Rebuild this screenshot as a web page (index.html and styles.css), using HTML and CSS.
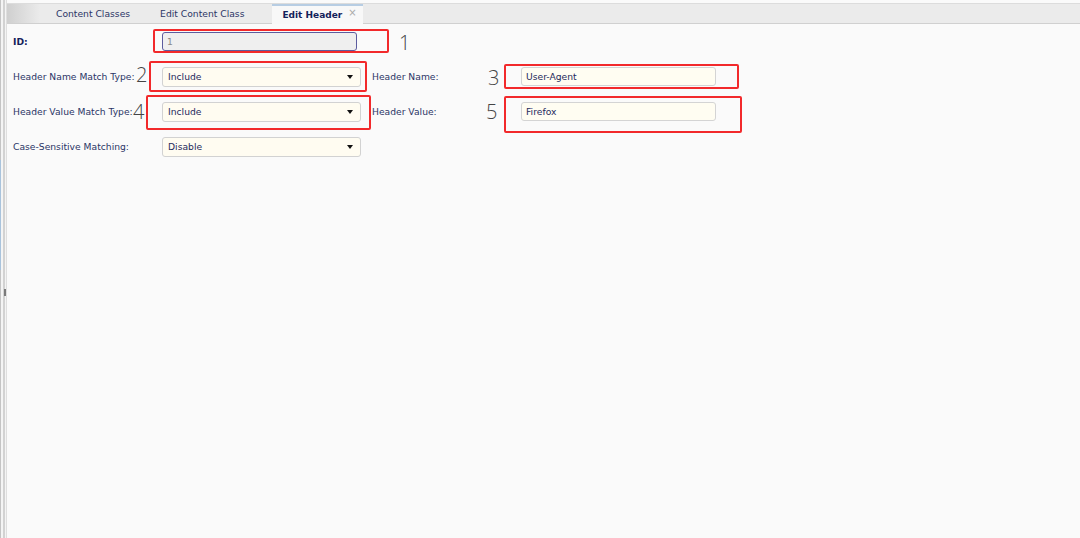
FILE: index.html
```html
<!DOCTYPE html>
<html lang="en">
<head>
  <meta charset="UTF-8" />
  <title>Edit Header</title>
  <link rel="stylesheet" href="styles.css">
</head>
<body>

<div class="page">
  <div class="side-strip">
    <div class="side-blue"></div>
    <div class="side-handle"></div>
  </div>

  <div class="main">
    <div class="tabbar">
      <div class="tab-start"></div>
      <div class="tab">Content Classes</div>
      <div class="tab">Edit Content Class</div>
      <div class="tab active">Edit Header <span class="tab-close">&times;</span></div>
    </div>

    <div class="form">
      <div class="row">
        <label class="lbl bold">ID:</label>
        <div class="field"><input class="txt readonly" value="1" readonly></div>
      </div>
      <div class="row">
        <label class="lbl">Header Name Match Type:</label>
        <div class="field"><div class="select">Include<span class="arrow"></span></div></div>
        <label class="lbl">Header Name:</label>
        <div class="field"><input class="txt" value="User-Agent"></div>
      </div>
      <div class="row">
        <label class="lbl">Header Value Match Type:</label>
        <div class="field"><div class="select">Include<span class="arrow"></span></div></div>
        <label class="lbl">Header Value:</label>
        <div class="field"><input class="txt" value="Firefox"></div>
      </div>
      <div class="row">
        <label class="lbl">Case-Sensitive Matching:</label>
        <div class="field"><div class="select">Disable<span class="arrow"></span></div></div>
      </div>

      <!-- annotations drawn over the form -->
      <div class="mark m1"></div><div class="num n1">1</div>
      <div class="mark m2"></div><div class="num n2">2</div>
      <div class="mark m3"></div><div class="num n3">3</div>
      <div class="mark m4"></div><div class="num n4">4</div>
      <div class="mark m5"></div><div class="num n5">5</div>
    </div>
  </div>
</div>

</body>
</html>
```

FILE: styles.css
```css
* { margin: 0; padding: 0; box-sizing: border-box; }

html, body {
  height: 100%;
  background: #fafafa;
  font-family: "DejaVu Sans", Verdana, sans-serif;
  font-size: 9.2px;
  color: #23305e;
}

.page {
  display: flex;
  height: 100%;
}

.side-strip {
  width: 7px;
  flex-shrink: 0;
  position: relative;
  background: #f4f4f4;
  border-left: 1px solid #c4c4c4;
  border-right: 1px solid #dedede;
}

.side-strip::before {
  content: "";
  position: absolute;
  top: 0;
  bottom: 0;
  left: 2px;
  width: 2px;
  background: #d2d2d2;
}

.side-blue {
  position: absolute;
  left: -1px;
  top: 160px;
  width: 1px;
  height: 110px;
  background: #a9c3dc;
}

.side-handle {
  position: absolute;
  left: 3px;
  top: 289px;
  width: 2px;
  height: 7px;
  background: #7a7a7a;
}

.main {
  flex: 1;
  display: flex;
  flex-direction: column;
}

.tabbar {
  margin-top: 3px;
  height: 21px;
  display: flex;
  align-items: stretch;
  background: #ebebeb;
  border-top: 1px solid #dcdcdc;
  border-bottom: 1px solid #d0d0d0;
}

.tab-start {
  width: 33px;
  background: linear-gradient(to right, #cfcfcf, #ebebeb);
}

.tab {
  display: flex;
  align-items: center;
  padding: 0 15px;
  color: #2b3566;
}

.tab:nth-child(2) { padding-left: 16px; }

.tab.active {
  margin-left: 13px;
  padding: 0 6px 0 10px;
  background: #f8f8f8;
  border-top: 2px solid #b7cde3;
  margin-bottom: -1px;
  font-weight: bold;
  font-size: 9px;
  color: #13215a;
}

.tab-close {
  font-weight: normal;
  color: #aaa;
  font-size: 10px;
  margin-left: 6px;
  align-self: flex-start;
  margin-top: 1px;
}

.form {
  position: relative;
  padding-left: 6px;
}

.row {
  display: grid;
  grid-template-columns: 149px 210px 149px 200px;
  height: 35px;
  align-items: center;
}

.lbl {
  color: #2b3566;
}

.lbl.bold {
  font-weight: bold;
  color: #13215a;
}

.txt {
  display: block;
  width: 195px;
  height: 19px;
  border: 1px solid #d4d4d4;
  border-radius: 3px;
  background: #fffdf2;
  padding: 0 4px;
  font: inherit;
  color: #1e2a5c;
  outline: none;
}

.txt.readonly {
  background: #efefef;
  border-color: #5c5c9e;
  color: #888;
  height: 19px;
}

.select {
  position: relative;
  width: 199px;
  height: 20px;
  border: 1px solid #d2d2d2;
  border-radius: 3px;
  background: #fffcf1;
  display: flex;
  align-items: center;
  padding-left: 5px;
  color: #1e2a5c;
}

.arrow {
  position: absolute;
  right: 7px;
  top: 7px;
  border-left: 3.5px solid transparent;
  border-right: 3.5px solid transparent;
  border-top: 4px solid #111;
}

.mark {
  position: absolute;
  border: 2px solid #f2292b;
  border-radius: 2px;
}

.m1 { left: 146px; top: 5px; width: 236px; height: 24px; }
.m2 { left: 142px; top: 37px; width: 218px; height: 31px; }
.m3 { left: 497px; top: 40px; width: 235px; height: 25px; }
.m4 { left: 139px; top: 71px; width: 225px; height: 35px; }
.m5 { left: 497px; top: 72px; width: 238px; height: 37px; }

.num {
  position: absolute;
  font-family: "Open Sans", "Noto Sans", sans-serif;
  font-weight: 300;
  font-size: 20px;
  line-height: 20px;
  color: #444;
}

.n1 { left: 392px; top: 9px; }
.n2 { left: 129px; top: 41px; }
.n3 { left: 481px; top: 44px; }
.n4 { left: 126px; top: 78px; }
.n5 { left: 479px; top: 78px; }
```
